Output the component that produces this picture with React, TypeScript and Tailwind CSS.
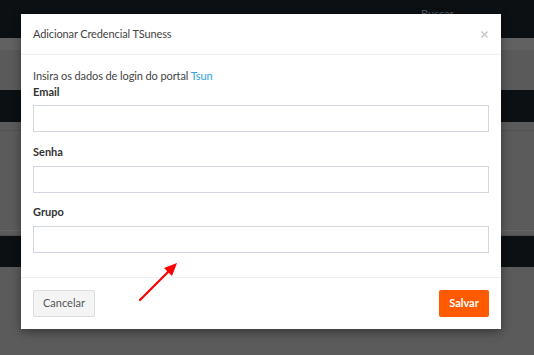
import React from "react";

export default function App() {
  return (
    <div className="relative w-[534px] h-[355px] overflow-hidden bg-[#5b5b5b] font-['Lato',sans-serif]">
      {/* dimmed page behind */}
      <div className="flex flex-col">
        <div className="h-[38px] bg-[#0c1013] flex justify-start pl-[421px] pt-[7px]">
          <span className="text-[11px] leading-[14px] text-[#4f565e]">Buscar</span>
        </div>
        <div className="h-[12px] bg-[#616161]" />
        <div className="h-[40px] bg-[#5a5a5a]" />
        <div className="h-[32px] bg-[#0c1012]" />
        <div className="h-[8px] bg-[#5b5b5b]" />
        <div className="h-[1px] bg-[#525252]" />
        <div className="h-[99px] bg-[#5b5b5b]" />
        <div className="h-[1px] bg-[#666666]" />
        <div className="h-[4px] bg-[#5b5b5b]" />
        <div className="h-[1px] bg-[#4e4e4e]" />
        <div className="h-[31px] bg-[#0c1012]" />
        <div className="h-[88px] bg-[#5b5b5b]" />
      </div>

      {/* modal */}
      <div className="absolute left-[21px] top-[14px] w-[480px] bg-white shadow-[0_3px_9px_rgba(0,0,0,0.4)]">
        <div className="h-[41px] flex items-center justify-between pl-[12px] pr-[13px] border-b border-[#f0f0f0]">
          <span className="text-[11px] tracking-[-0.12px] text-[#444]">Adicionar Credencial TSuness</span>
          <svg width="7" height="7" viewBox="0 0 7 7" className="mt-[1px]">
            <path d="M0.5 0.5 L6.5 6.5 M6.5 0.5 L0.5 6.5" stroke="#c6c6c6" strokeWidth="1.4" />
          </svg>
        </div>
        <div className="px-[12px] pt-[13px] pb-[24px]">
          <p className="text-[11px] leading-[16px] tracking-[-0.1px] text-[#444]">
            Insira os dados de login do portal <span className="text-[#2d9fe0]">Tsun</span>
          </p>
          <div className="flex flex-col">
            <label className="text-[11px] leading-[16px] font-bold text-[#333]">Email</label>
            <div className="mt-[5px] h-[27px] border border-[#d2d6de]" />
          </div>
          <div className="flex flex-col mt-[12px]">
            <label className="text-[11px] leading-[16px] font-bold text-[#333]">Senha</label>
            <div className="mt-[6px] h-[27px] border border-[#d2d6de]" />
          </div>
          <div className="flex flex-col mt-[11px]">
            <label className="text-[11px] leading-[16px] font-bold text-[#333]">Grupo</label>
            <div className="mt-[6px] h-[27px] border border-[#d2d6de]" />
          </div>
        </div>
        <div className="border-t border-[#f0f0f0] px-[12px] pt-[12px] pb-[12px] flex justify-between">
          <button className="w-[62px] h-[27px] bg-[#f4f4f4] border border-[#dddddd] rounded-[2px] text-[11px] text-[#555]">
            Cancelar
          </button>
          <button className="w-[50px] h-[27px] bg-[#ff5a00] rounded-[2px] text-[11px] font-bold text-white">
            Salvar
          </button>
        </div>
      </div>

      {/* red arrow annotation */}
      <svg className="absolute left-0 top-0" width="534" height="355" viewBox="0 0 534 355">
        <line x1="140" y1="300" x2="170" y2="270" stroke="#ff0000" strokeWidth="2.2" strokeLinecap="round" />
        <polygon points="177,263 164,268 172,276" fill="#ff0000" />
      </svg>
    </div>
  );
}
